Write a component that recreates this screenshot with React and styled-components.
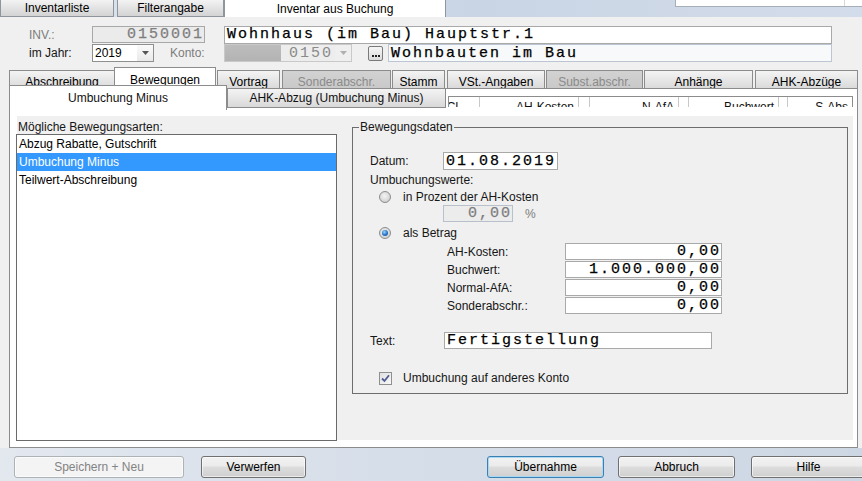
import React from "react";
import styled, { createGlobalStyle } from "styled-components";

const GlobalStyle = createGlobalStyle`
  html, body {
    margin: 0;
    padding: 0;
    background: #f0f0f0;
  }
  body {
    font-family: "Liberation Sans", Arial, sans-serif;
    font-size: 12px;
    color: #111;
  }
  * {
    box-sizing: border-box;
  }
`;

const Window = styled.div`
  width: 862px;
  height: 481px;
  overflow: hidden;
  display: flex;
  flex-direction: column;
  background: #f0f0f0;
`;

/* ---------- top tab strip ---------- */

const TopBar = styled.div`
  height: 17px;
  flex: none;
  display: flex;
  background: linear-gradient(90deg, #dde4ee 0%, #c9d5e5 55%, #d3dcea 100%);
`;

const TopTab = styled.div`
  width: ${(p) => p.$w}px;
  margin-right: ${(p) => p.$gap || 0}px;
  display: flex;
  align-items: center;
  justify-content: center;
  border: 1px solid #8f959c;
  border-top: none;
  border-bottom: ${(p) => (p.$active ? "none" : "1px solid #8f959c")};
  background: ${(p) =>
    p.$active ? "#ffffff" : "linear-gradient(#f3f3f3, #d3d3d3)"};
  color: #000;
`;

const TopCombo = styled.div`
  margin-left: auto;
  width: 187px;
  height: 7px;
  background: #fff;
  border-left: 1px solid #a6aeb8;
  border-bottom: 1px solid #a6aeb8;
  display: flex;
  justify-content: flex-end;
`;

const TopComboArrow = styled.div`
  width: 18px;
  border-left: 1px solid #d5d9de;
`;

/* ---------- main area ---------- */

const Main = styled.div`
  flex: 1;
  display: flex;
  flex-direction: column;
  min-height: 0;
`;

const HeaderForm = styled.div`
  padding: 9px 0 0 29px;
  display: flex;
  flex-direction: column;
  gap: 1px;
`;

const Row = styled.div`
  display: flex;
  align-items: center;
  height: ${(p) => p.$h || 18}px;
`;

const Label = styled.span`
  width: ${(p) => p.$w || 63}px;
  margin-left: ${(p) => p.$ml || 0}px;
  flex: none;
  color: ${(p) => (p.$disabled ? "#7c7c7c" : "#161616")};
  white-space: nowrap;
`;

const Field = styled.div`
  width: ${(p) => p.$w}px;
  height: ${(p) => p.$h || 17}px;
  margin-left: ${(p) => p.$ml || 0}px;
  flex: none;
  display: flex;
  align-items: center;
  justify-content: ${(p) => (p.$right ? "flex-end" : "flex-start")};
  padding: 0 ${(p) => (p.$right ? 0 : 2)}px 0 2px;
  border: 1px solid ${(p) => p.$border || "#a9a9a9"};
  background: ${(p) => p.$bg || "#ffffff"};
  color: ${(p) => (p.$disabled ? "#7e7e7e" : "#000")};
  font-family: "Liberation Mono", "DejaVu Sans Mono", monospace;
  font-size: 15px;
  letter-spacing: 2px;
  -webkit-text-stroke: 0.25px currentColor;
  white-space: nowrap;
  overflow: hidden;
`;

const Combo = styled.div`
  width: ${(p) => p.$w}px;
  height: 18px;
  margin-left: ${(p) => p.$ml || 0}px;
  flex: none;
  display: flex;
  border: 1px solid ${(p) => (p.$disabled ? "#c9c9c9" : "#8e8f8f")};
  background: ${(p) => (p.$disabled ? "#ededed" : "#fff")};
`;

const ComboText = styled.div`
  flex: 1;
  display: flex;
  align-items: center;
  justify-content: ${(p) => (p.$right ? "flex-end" : "flex-start")};
  padding: 0 2px;
  font-family: ${(p) =>
    p.$mono ? '"Liberation Mono", monospace' : '"Liberation Sans", Arial, sans-serif'};
  font-size: ${(p) => (p.$mono ? 15 : 12)}px;
  letter-spacing: ${(p) => (p.$mono ? 2 : 0)}px;
  color: ${(p) => (p.$disabled ? "#8a8a8a" : "#000")};
`;

const ComboGrey = styled.div`
  width: 56px;
  background: linear-gradient(#bdbdbd, #b3b3b3);
`;

const ComboButton = styled.div`
  width: 16px;
  flex: none;
  display: flex;
  align-items: center;
  justify-content: center;
  background: ${(p) => (p.$disabled ? "#efefef" : "linear-gradient(#fafafa, #e9e9e9)")};
`;

const Arrow = ({ color }) => (
  <svg width="7" height="4" viewBox="0 0 7 4">
    <path d="M0 0 H7 L3.5 4 Z" fill={color} />
  </svg>
);

const DotsButton = styled.div`
  width: 15px;
  height: 15px;
  margin: 0 5px 0 16px;
  flex: none;
  border: 1px solid #7a7a7a;
  border-radius: 2px;
  background: linear-gradient(#f6f6f6, #dcdcdc);
  display: flex;
  align-items: center;
  justify-content: center;
  gap: 1px;
  padding-top: 6px;
`;

const Dot = styled.span`
  width: 2px;
  height: 2px;
  background: #222;
`;

/* ---------- main tabs ---------- */

const MainTabs = styled.div`
  margin-top: 5px;
  height: 21px;
  padding-left: 9px;
  display: flex;
  align-items: flex-end;
  flex: none;
`;

const MainTab = styled.div`
  width: ${(p) => p.$w}px;
  margin-left: ${(p) => p.$ml}px;
  height: ${(p) => (p.$active ? 21 : 18)}px;
  flex: none;
  display: flex;
  align-items: flex-start;
  justify-content: center;
  padding-top: ${(p) => (p.$active ? 5 : 4)}px;
  line-height: 14px;
  border: 1px solid #8c8c8c;
  border-bottom: none;
  background: ${(p) =>
    p.$active
      ? "#ffffff"
      : p.$disabled
      ? "linear-gradient(#d2d2d2, #c9c9c9)"
      : "linear-gradient(#f4f4f4, #dadada)"};
  color: ${(p) => (p.$disabled ? "#8a8a8a" : "#000")};
  white-space: nowrap;
  overflow: hidden;
  position: ${(p) => (p.$active ? "relative" : "static")};
`;

const TabBody = styled.div`
  margin-left: 9px;
  width: 849px;
  flex: 1;
  display: flex;
  flex-direction: column;
  border: 1px solid #8c8c8c;
  background: #fff;
  min-height: 0;
`;

const SubTabRow = styled.div`
  position: relative;
  margin: -4px 0 0 -1px;
  height: 23px;
  display: flex;
  align-items: flex-end;
  flex: none;
`;

const SubTab = styled.div`
  width: ${(p) => p.$w}px;
  height: ${(p) => (p.$active ? 25 : 20)}px;
  align-self: ${(p) => (p.$active ? "flex-start" : "flex-end")};
  flex: none;
  display: flex;
  align-items: center;
  justify-content: center;
  padding-bottom: ${(p) => (p.$active ? 1 : 0)}px;
  border: 1px solid #8c8c8c;
  border-bottom: ${(p) => (p.$active ? "none" : "1px solid #8c8c8c")};
  background: ${(p) => (p.$active ? "#fff" : "linear-gradient(#f4f4f4, #d9d9d9)")};
  font-size: 12px;
`;

const HeaderStrip = styled.div`
  margin: 0 4px 1px 2px;
  flex: 1;
  height: 11px;
  display: flex;
  border: 1px solid #8c8c8c;
  border-bottom: none;
  overflow: hidden;
  align-self: flex-end;
`;

const HeaderCell = styled.div`
  width: ${(p) => p.$w}px;
  flex: ${(p) => (p.$grow ? 1 : "none")};
  display: flex;
  justify-content: flex-end;
  padding: 4px ${(p) => p.$pr || 4}px 0 0;
  border-right: ${(p) => (p.$last ? "none" : "1px solid #c8c8c8")};
  line-height: 13px;
  white-space: nowrap;
  overflow: hidden;
  color: #111;
`;

const SubPanel = styled.div`
  margin: 8px 4px 7px 7px;
  flex: 1;
  display: flex;
  background: #f0f0f0;
  min-height: 0;
`;

const ListColumn = styled.div`
  width: 321px;
  margin-left: -1px;
  flex: none;
  display: flex;
  flex-direction: column;
`;

const ListTitle = styled.div`
  padding: 4px 0 0 2px;
  height: 18px;
  line-height: 14px;
  color: #161616;
`;

const ListBox = styled.div`
  flex: 1;
  margin-bottom: -1px;
  border: 1px solid #6a6a6a;
  background: #fff;
`;

const ListItem = styled.div`
  height: 18px;
  line-height: 18px;
  padding-left: 2px;
  background: ${(p) => (p.$selected ? "#3399ff" : "transparent")};
  color: ${(p) => (p.$selected ? "#fff" : "#000")};
`;

const Group = styled.fieldset`
  margin: 4px 0 0 15px;
  padding: 0;
  width: 496px;
  min-width: 0;
  align-self: flex-start;
  border: 1px solid #6d6d6d;
`;

const GroupTitle = styled.legend`
  margin-left: 6px;
  padding: 0 1px;
  line-height: 14px;
  font-size: 12px;
  color: #161616;
`;

const GroupContent = styled.div`
  padding: 18px 0 8px 17px;
  display: flex;
  flex-direction: column;
`;

const FormRow = styled.div`
  display: flex;
  align-items: center;
  height: ${(p) => p.$h || 17}px;
  margin-top: ${(p) => p.$mt || 0}px;
  margin-bottom: ${(p) => p.$mb || 0}px;
  padding-left: ${(p) => p.$pl || 0}px;
  color: #161616;
`;

const Radio = styled.span`
  width: 12px;
  height: 12px;
  flex: none;
  margin-right: 12px;
  border-radius: 50%;
  border: 1px solid #8b8d8f;
  background: radial-gradient(circle at 45% 40%, #f4f4f4 0%, #dadada 55%, #c4c4c4 100%);
  display: flex;
  align-items: center;
  justify-content: center;
`;

const RadioDot = styled.span`
  width: 6px;
  height: 6px;
  border-radius: 50%;
  background: radial-gradient(circle at 40% 35%, #9fd4f8 0%, #2a7bd0 50%, #0b3f85 100%);
`;

const CheckBox = styled.span`
  width: 13px;
  height: 13px;
  flex: none;
  margin-right: 11px;
  border: 1px solid #8e8f8f;
  background: linear-gradient(135deg, #e0e0e0, #f8f8f8);
  display: flex;
  align-items: center;
  justify-content: center;
`;

/* ---------- bottom bar ---------- */

const BottomBar = styled.div`
  height: 33px;
  flex: none;
  display: flex;
  padding: 8px 0 0 14px;
  background: linear-gradient(90deg, #e3e8ef 0%, #d6dee9 45%, #cdd7e4 100%);
`;

const Button = styled.div`
  width: ${(p) => p.$w}px;
  height: 22px;
  margin-left: ${(p) => p.$ml || 0}px;
  flex: none;
  display: flex;
  align-items: center;
  justify-content: center;
  border-radius: 3px;
  border: 1px solid
    ${(p) => (p.$disabled ? "#adb2b5" : p.$focus ? "#3c7fb1" : "#707070")};
  background: ${(p) =>
    p.$disabled
      ? "#f4f4f4"
      : "linear-gradient(#f2f2f2 0%, #ebebeb 45%, #dddddd 50%, #cfcfcf 100%)"};
  box-shadow: ${(p) =>
    p.$focus ? "inset 0 0 0 1px #a7d9f5" : "inset 0 0 0 1px rgba(255,255,255,0.6)"};
  color: ${(p) => (p.$disabled ? "#838383" : "#000")};
  white-space: nowrap;
`;

const mainTabs = [
  { label: "Abschreibung", w: 106, ml: 0 },
  { label: "Bewegungen", w: 102, ml: -1, active: true },
  { label: "Vortrag", w: 63, ml: 1 },
  { label: "Sonderabschr.", w: 109, ml: 2, disabled: true },
  { label: "Stamm", w: 53, ml: 1 },
  { label: "VSt.-Angaben", w: 98, ml: 2 },
  { label: "Subst.abschr.", w: 97, ml: 1, disabled: true },
  { label: "Anhänge", w: 109, ml: 1 },
  { label: "AHK-Abzüge", w: 103, ml: 2 },
];

const amounts = [
  ["AH-Kosten:", "0,00"],
  ["Buchwert:", "1.000.000,00"],
  ["Normal-AfA:", "0,00"],
  ["Sonderabschr.:", "0,00"],
];

export default function App() {
  return (
    <>
      <GlobalStyle />
      <Window>
        <TopBar>
          <TopTab $w={114} $gap={3}>Inventarliste</TopTab>
          <TopTab $w={107} $gap={0}>Filterangabe</TopTab>
          <TopTab $w={222} $active>Inventar aus Buchung</TopTab>
          <TopCombo>
            <TopComboArrow />
          </TopCombo>
        </TopBar>

        <Main>
          <HeaderForm>
            <Row $h={17}>
              <Label $disabled>INV.:</Label>
              <Field $w={113} $right $disabled $bg="#ebebeb" $border="#a8a8a8">
                0150001
              </Field>
              <Field $w={608} $h={18} $ml={19}>
                Wohnhaus (im Bau) Hauptstr.1
              </Field>
            </Row>
            <Row>
              <Label>im Jahr:</Label>
              <Combo $w={62}>
                <ComboText>2019</ComboText>
                <ComboButton>
                  <Arrow color="#555" />
                </ComboButton>
              </Combo>
              <Label $disabled $w={54} $ml={16}>
                Konto:
              </Label>
              <Combo $w={128} $disabled>
                <ComboGrey />
                <ComboText $mono $right $disabled>
                  0150
                </ComboText>
                <ComboButton $disabled>
                  <Arrow color="#b0b0b0" />
                </ComboButton>
              </Combo>
              <DotsButton>
                <Dot />
                <Dot />
                <Dot />
              </DotsButton>
              <Field $w={444} $h={18} $bg="#f8f9fa" $border="#bcc6d2">
                Wohnbauten im Bau
              </Field>
            </Row>
          </HeaderForm>

          <MainTabs>
            {mainTabs.map((t) => (
              <MainTab
                key={t.label}
                $w={t.w}
                $ml={t.ml}
                $active={t.active}
                $disabled={t.disabled}
              >
                {t.label}
              </MainTab>
            ))}
          </MainTabs>

          <TabBody>
            <SubTabRow>
              <SubTab $w={218} $active>
                Umbuchung Minus
              </SubTab>
              <SubTab $w={219}>AHK-Abzug (Umbuchung Minus)</SubTab>
              <HeaderStrip>
                <HeaderCell $w={31} $pr={17}>
                  GMCL
                </HeaderCell>
                <HeaderCell $w={99}>AH-Kosten</HeaderCell>
                <HeaderCell $w={11} />
                <HeaderCell $w={89}>N-AfA</HeaderCell>
                <HeaderCell $w={10} />
                <HeaderCell $w={90}>Buchwert</HeaderCell>
                <HeaderCell $w={9} />
                <HeaderCell $grow $last $pr={0}>
                  S-Abs
                </HeaderCell>
              </HeaderStrip>
            </SubTabRow>

            <SubPanel>
              <ListColumn>
                <ListTitle>Mögliche Bewegungsarten:</ListTitle>
                <ListBox>
                  <ListItem>Abzug Rabatte, Gutschrift</ListItem>
                  <ListItem $selected>Umbuchung Minus</ListItem>
                  <ListItem>Teilwert-Abschreibung</ListItem>
                </ListBox>
              </ListColumn>

              <Group>
                <GroupTitle>Bewegungsdaten</GroupTitle>
                <GroupContent>
                  <FormRow $h={18}>
                    <Label $w={73}>Datum:</Label>
                    <Field $w={115} $h={18}>
                      01.08.2019
                    </Field>
                  </FormRow>
                  <FormRow $h={14} $mt={3}>
                    Umbuchungswerte:
                  </FormRow>
                  <FormRow $h={14} $mt={3} $pl={9}>
                    <Radio />
                    in Prozent der AH-Kosten
                  </FormRow>
                  <FormRow $mt={1} $pl={73}>
                    <Field $w={70} $right $disabled $bg="#ececec" $border="#b7c0cb">
                      0,00
                    </Field>
                    <Label $w={20} $ml={12} $disabled>
                      %
                    </Label>
                  </FormRow>
                  <FormRow $h={14} $mt={4} $pl={9}>
                    <Radio>
                      <RadioDot />
                    </Radio>
                    als Betrag
                  </FormRow>
                  {amounts.map(([label, value], i) => (
                    <FormRow key={label} $mt={i === 0 ? 3 : 0} $mb={1} $pl={77}>
                      <Label $w={118}>{label}</Label>
                      <Field $w={157} $right>
                        {value}
                      </Field>
                    </FormRow>
                  ))}
                  <FormRow $mt={17}>
                    <Label $w={74}>Text:</Label>
                    <Field $w={268}>Fertigstellung</Field>
                  </FormRow>
                  <FormRow $h={14} $mt={22} $pl={9}>
                    <CheckBox>
                      <svg width="9" height="9" viewBox="0 0 9 9">
                        <path
                          d="M1 4.5 L3.5 7 L8 1.2"
                          fill="none"
                          stroke="#4f5c92"
                          strokeWidth="1.8"
                        />
                      </svg>
                    </CheckBox>
                    Umbuchung auf anderes Konto
                  </FormRow>
                </GroupContent>
              </Group>
            </SubPanel>
          </TabBody>
        </Main>

        <BottomBar>
          <Button $w={170} $disabled>
            Speichern + Neu
          </Button>
          <Button $w={105} $ml={17}>
            Verwerfen
          </Button>
          <Button $w={117} $ml={181} $focus>
            Übernahme
          </Button>
          <Button $w={117} $ml={14}>
            Abbruch
          </Button>
          <Button $w={115} $ml={16}>
            Hilfe
          </Button>
        </BottomBar>
      </Window>
    </>
  );
}
